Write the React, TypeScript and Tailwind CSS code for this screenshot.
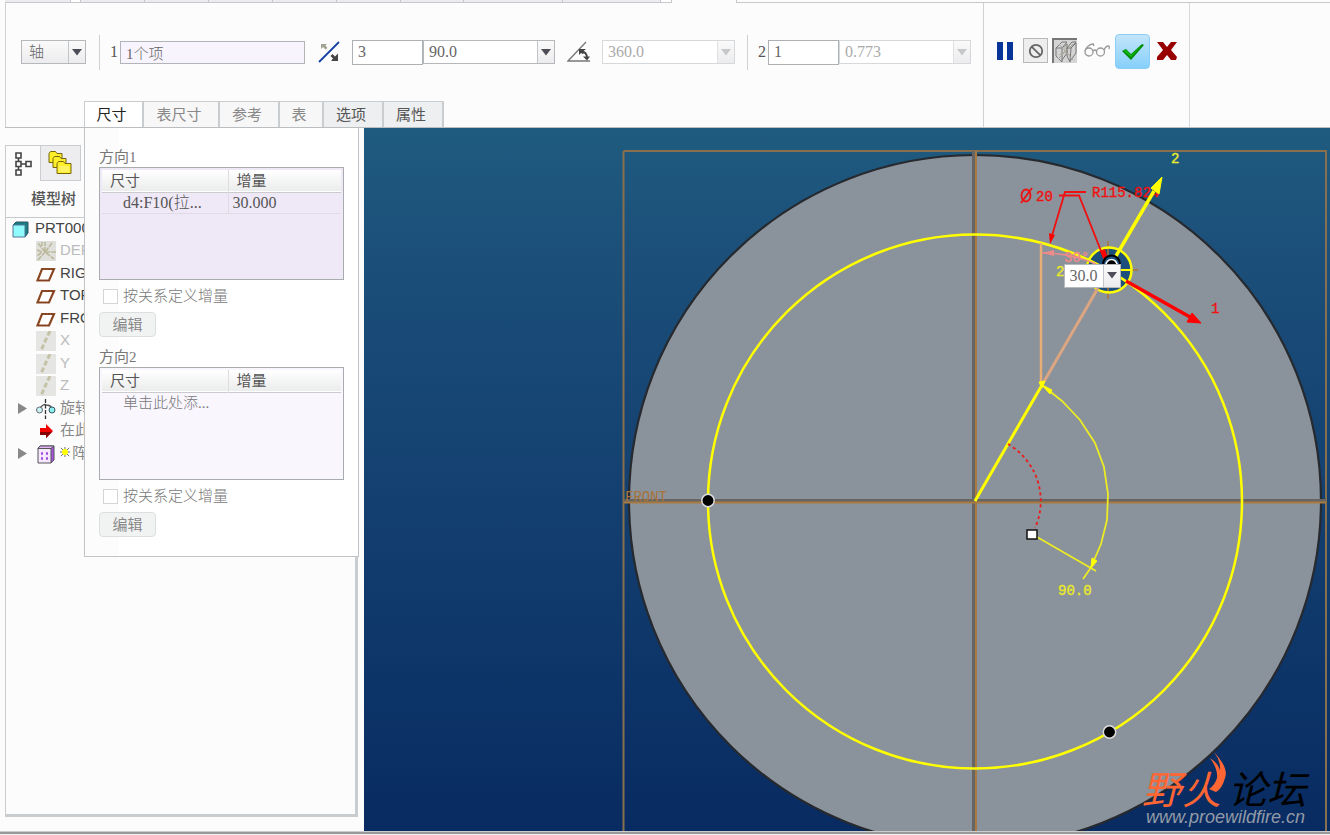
import type { ReactNode } from "react";
import clsx from "clsx";

interface ComboProps { label: string; value: string; width: string; disabled?: boolean; shaded?: boolean }

interface TreeNode { name: string; icon: ReactNode; muted?: boolean; expandable?: boolean; cjk?: boolean; fresh?: boolean }

const SONG = "font-['Liberation_Serif','Noto_Sans_CJK_SC',serif]";

const TABS = [
  { label: "尺寸", width: "w-[60px]", style: "bg-white text-[#222]" },
  { label: "表尺寸", width: "w-[76px]", style: "bg-[#f7f7f7] text-[#888]" },
  { label: "参考", width: "w-[60px]", style: "bg-[#f7f7f7] text-[#888]" },
  { label: "表", width: "w-[44px]", style: "bg-[#f7f7f7] text-[#888]" },
  { label: "选项", width: "w-[60px]", style: "bg-[#edeff1] text-[#555]" },
  { label: "属性", width: "w-[60px]", style: "bg-[#edeff1] text-[#555]" },
];

// Lower edges of the ribbon groups that are scrolled out above the dashboard
const GROUPS = ["w-[66px]", "w-[10px]", "w-[64px]", "w-[64px]", "w-[64px]", "w-[64px]", "w-[64px]", "w-[63px]", "w-[99px]", "w-[98px]", "w-[11px]"];

function Combo({ label, value, width, disabled, shaded }: ComboProps) {
  return (
    <div className={clsx("relative h-6 shrink-0", width)}>
      <select
        aria-label={label}
        disabled={disabled}
        className={clsx(
          "h-full w-full appearance-none rounded-none border pl-[5px] text-base leading-5 opacity-100",
          disabled ? "border-[#d6d9dc] text-[#aaa]" : "border-[#b5b9bc] text-[#666]",
          shaded ? "bg-linear-to-b from-[#fafafa] to-[#ececee] pl-[7px] text-[15px]" : "bg-white",
        )}
      >
        <option>{value}</option>
      </select>
      <span
        className={clsx(
          "pointer-events-none absolute inset-y-px right-px flex w-[17px] items-center justify-center border-l bg-linear-to-b from-[#fafafa] to-[#ececee]",
          disabled ? "border-[#dfe1e3] text-[#c5c7c9]" : "border-[#c3c6c8] text-[#4d4d58]",
        )}
      >
        <svg viewBox="0 0 10 7" className="w-2.5"><path d="M0 0h10L5 6.500z" fill="currentColor" /></svg>
      </span>
    </div>
  );
}

function FlipIcon() {
  return (
    <svg viewBox="0 0 22 22" className="w-[22px]">
      <path d="M1 21 21 1" stroke="#153fa5" strokeWidth="1.800" />
      <path d="M3 3h6L7.500 4.500 9.500 7 7.500 8.500 5 6 3 8z" fill="#a3a394" />
      <path d="M20 20h-7l2-2.500-2.500-2.500 2-2 2.500 2.500 3-3z" fill="#454545" />
    </svg>
  );
}

function AngleIcon() {
  return (
    <svg viewBox="0 0 24 22" className="w-6" fill="none">
      <path d="M19 1 1 20h22" stroke="#777" strokeWidth="1.300" />
      <path d="M14 10q6 1 6 7" stroke="#444" strokeWidth="1.800" />
      <path d="M12 8h7l-2.500 2 1 2-2 1-1.500-1-2 2zM16 15.500h7l-3 4z" fill="#444" />
    </svg>
  );
}

function CubeIcon() {
  return (
    <svg viewBox="0 0 22 22" className="w-[22px]" fill="none" strokeWidth="1">
      <path d="M1 7 7 1h5L7 7H1v8l6 6V7l5-4v9l-5 7M12 7l5-6h4l-5 6h-4v8l3 6 1-14 5-5v10l-6 8" stroke="#777" />
      <path d="M4 3 18 19M3 18 18 3M4 14l5-3 6 3M10 3v8" stroke="#aaa89c" />
    </svg>
  );
}

function GlassesIcon() {
  return (
    <svg viewBox="0 0 26 16" className="w-[26px]" fill="none" stroke="#999" strokeWidth="1.300">
      <circle cx="5" cy="10" r="4" />
      <circle cx="16.500" cy="10" r="4" />
      <path d="M9 9q1.500-2 3.500 0M1 9C2 5 6 2 9 2q1 0 .500 2M20 8q2-4 4-4 2 0 1 3" />
    </svg>
  );
}

function DatumPlane() {
  return (
    <svg viewBox="0 0 20 20" className="w-5">
      <path d="M6 5h12l-5 11.500H1.500z" fill="#fff" stroke="#95502a" strokeWidth="2.200" />
      <path d="M6 5h12l-5 11.500H1.500z" fill="none" stroke="#6d3517" strokeWidth=".8" strokeDasharray="2 1" />
    </svg>
  );
}

function DatumAxis() {
  return (
    <svg viewBox="0 0 20 20" className="w-5">
      <path d="M0 0h20v20H0z" fill="#e5e5e4" />
      <path d="M14 0q-5 10-9 20" fill="none" stroke="#c5c3a6" strokeWidth="3" strokeDasharray="5 2.500" />
    </svg>
  );
}

function CsysIcon() {
  return (
    <svg viewBox="0 0 20 20" className="w-5">
      <path d="M0 0h20v20H0z" fill="#dfdfdc" />
      <path d="m2 19 7-8 9 7M9 11 2 2M9 11h11M9 11V1M1 9l5 2-5 4M16 2l-6 8M6 1v4" fill="none" stroke="#bcb99b" strokeWidth="1.600" strokeDasharray="5 1" />
    </svg>
  );
}

const TREE: TreeNode[] = [
  { name: "DEFAULT", muted: true, icon: <CsysIcon /> },
  { name: "RIGHT", icon: <DatumPlane /> },
  { name: "TOP", icon: <DatumPlane /> },
  { name: "FRONT", icon: <DatumPlane /> },
  { name: "X", muted: true, icon: <DatumAxis /> },
  { name: "Y", muted: true, icon: <DatumAxis /> },
  { name: "Z", muted: true, icon: <DatumAxis /> },
  {
    name: "旋转", cjk: true, expandable: true,
    icon: (
      <svg viewBox="0 0 20 20" className="w-5">
        <path d="M3 10Q8 4 10 6q5 0 6 4" fill="none" stroke="#555" strokeWidth="1.300" />
        <path d="M9.500 0v20" stroke="#333" strokeWidth="1.300" strokeDasharray="4 1.500" />
        <circle cx="3.500" cy="11" r="3" fill="#c9f4f4" stroke="#667" />
        <circle cx="16" cy="11" r="3" fill="#8deeee" stroke="#356" />
      </svg>
    ),
  },
  {
    name: "在此", cjk: true,
    icon: (
      <svg viewBox="0 0 20 20" className="w-5">
        <path d="M4 7h6V3l7 7-7 7v-3H4z" fill="#f20000" />
        <path d="M4 11h12l-6 6v-3H4z" fill="#840000" />
      </svg>
    ),
  },
  {
    name: "阵列", cjk: true, expandable: true, fresh: true,
    icon: (
      <svg viewBox="0 0 20 20" className="w-5">
        <path d="M2 4.500 4 2h14v14l-3 3" fill="#a653e0" stroke="#555" />
        <path d="M2 4.500 4 2h14l-3 2.500z" fill="#e3b5fb" stroke="#555" />
        <path d="M2 4.500h13V19H2z" fill="#f6e8ff" stroke="#555" />
        <path d="M5 9.500h2M10 9.500h2M5 14.500h2M10 14.500h2" stroke="#a34be0" strokeWidth="2.500" />
      </svg>
    ),
  },
];

function Dashboard() {
  return (
    <div className="relative z-10 ml-[5px] flex h-[125px] border-b border-[#babec1]">
      <div className="relative w-[979px] shrink-0 border-x border-[#cfd2d4] text-[#555]">
        <div className="flex h-[98px] items-center pl-[15px]">
          <Combo label="阵列类型" value="轴" width="w-[65px]" shaded />
          <span className="ml-[13px] h-[35px] w-px bg-[#cfd1d3]" />
          <label htmlFor="axis" className="ml-2.5 text-base">1</label>
          <input id="axis" defaultValue="1个项" className="ml-0.5 h-[23px] w-[185px] border border-[#b2b5b8] bg-[#f8f4fd] px-[5px] text-[15px] text-[#666]" />
          <button aria-label="反向" className="ml-[13px]"><FlipIcon /></button>
          <input aria-label="成员数" defaultValue="3" className="ml-3 h-[25px] w-[71px] shrink-0 border border-[#adb1b4] bg-white px-[5px] text-base text-[#666]" />
          <Combo label="角度" value="90.0" width="w-[132px]" />
          <button aria-label="角度范围" className="ml-3"><AngleIcon /></button>
          <span className="w-[11px]" />
          <Combo label="总角度" value="360.0" width="w-[133px]" disabled />
          <span className="ml-3 h-[35px] w-px bg-[#cfd1d3]" />
          <label htmlFor="radial" className="ml-2.5 text-base">2</label>
          <input id="radial" defaultValue="1" className="ml-0.5 h-[25px] w-[71px] shrink-0 border border-[#adb1b4] bg-white px-[5px] text-base text-[#666]" />
          <Combo label="径向间距" value="0.773" width="w-[132px]" disabled />
        </div>
        <div className="flex h-[26px] pl-[78px]" role="tablist">
          {TABS.map((tab, i) => (
            <button
              key={tab.label}
              role="tab"
              aria-selected={i === 0}
              className={clsx("h-full border-t border-r-2 border-[#c9cdd0] pr-1 text-[15px] leading-5 font-normal", i === 0 && "border-l", tab.width, tab.style)}
            >
              {tab.label}
            </button>
          ))}
        </div>
        <DimensionPanel />
      </div>
      <div className="flex h-full w-[206px] shrink-0 items-start border-r border-[#d6d9db] pt-[31px] pl-[13px]">
        <button aria-label="暂停" className="mt-2 flex h-[18px] w-4 justify-between">
          <span className="w-1.5 bg-[#073499]" />
          <span className="w-1.5 bg-[#073499]" />
        </button>
        <button aria-label="无预览" className="mt-1 ml-2.5 flex size-[25px] items-center justify-center border border-[#b9b9b9] bg-[#eee]">
          <svg viewBox="0 0 18 18" className="w-4" fill="none" stroke="#666" strokeWidth="2"><circle cx="9" cy="9" r="7" /><path d="m4 4 10 10" /></svg>
        </button>
        <button aria-label="几何预览" className="mt-1 ml-1 flex size-[25px] items-center justify-center border-t-2 border-l-2 border-[#777] bg-[#d4d4d4]"><CubeIcon /></button>
        <button aria-label="校验" className="mt-2 ml-[7px]"><GlassesIcon /></button>
        <button aria-label="确定" className="ml-[5px] flex h-[35px] w-[35px] items-center justify-center rounded-sm border border-[#8ccdf5] bg-linear-to-b from-[#c2e5fb] to-[#85cffa]">
          <svg viewBox="0 0 22 18" className="w-[22px]"><path d="m0 8 4-2 5 5L20 1l2 1L9 17z" fill="#008c00" /><path d="m2 8 2-1 5 5L20 2 9 14z" fill="#10bb16" /></svg>
        </button>
        <button aria-label="取消" className="mt-2 ml-[7px]">
          <svg viewBox="0 0 20 18" className="w-5"><path d="M0 0h6l4 5 4-5h6l-6 8 6 7-1 3h-5l-4-5-4 5H0v-3l6-7z" fill="#980000" /></svg>
        </button>
      </div>
    </div>
  );
}

function DirectionTable({ index, dimension, increment }: { index: number; dimension: string; increment?: string }) {
  return (
    <section className="mb-[11px] text-[15px] text-[#777]">
      <h2 className="h-[19px] leading-[19px] font-normal">方向{index}</h2>
      <div className={clsx("h-[113px] w-[245px] border border-[#a9acae] p-0.5", increment ? "bg-[#efe9f7]" : "bg-[#f9f6fe]")}>
        <table className="w-full table-fixed border-collapse text-left">
          <thead>
            <tr className="h-[22px] border-b border-[#c9cbcd] bg-linear-to-b from-white to-[#ebecec] text-[#555]">
              <th className="w-[126px] border-r border-[#ddd] pl-2 leading-5 font-normal">尺寸</th>
              <th className="pl-2 leading-5 font-normal">增量</th>
            </tr>
          </thead>
          <tbody>
            <tr className={clsx("h-[21px]", increment && "border-b border-[#dfdbe4] text-base text-[#555]")}>
              <td className={clsx("pl-[21px] leading-5 whitespace-nowrap", increment && "border-r border-[#dfdbe4]")}>{dimension}</td>
              <td className="pl-1 leading-5">{increment}</td>
            </tr>
          </tbody>
        </table>
      </div>
      <label className="mt-[5px] ml-1 flex h-[22px] items-center gap-[5px]">
        <input type="checkbox" className="size-[15px] appearance-none border border-[#d5d5d5] bg-white" />
        按关系定义增量
      </label>
      <button className="mt-[5px] block h-[25px] w-[57px] rounded-sm border border-[#dcdedf] bg-[#f1f3f3] leading-5 font-normal text-[#888]">编辑</button>
    </section>
  );
}

function DimensionPanel() {
  return (
    <div className="absolute top-full left-[78px] mt-px w-[275px] border border-t-0 border-[#c0c4c8] bg-linear-to-r from-[#fcfcfc] from-[34px] to-white to-[34px] pt-5 pb-2 pl-3.5">
      <DirectionTable index={1} dimension="d4:F10(拉..." increment="30.000" />
      <DirectionTable index={2} dimension="单击此处添..." />
    </div>
  );
}

function ModelTree() {
  return (
    <aside className="flex w-[364px] shrink-0 flex-col pt-[17px] pr-1.5 pb-3.5 pl-[5px]">
      <div className="flex h-9 text-[#333]">
        <button aria-label="模型树" className="flex w-9 items-center justify-center border border-b-0 border-[#c9cdd0]">
          <svg viewBox="0 0 17 24" className="w-[17px]" fill="none" stroke="#444" strokeWidth="1.600"><path d="M1 1h5v5H1zM1 9.500h5v5H1zM1 18h5v5H1zM11 9.500h5v5h-5zM3.500 6v3.500M3.500 14.500V18M6 12h5" /></svg>
        </button>
        <button aria-label="文件夹浏览器" className="flex w-10 items-center justify-center border-y border-r border-[#c9cdd0] bg-[#ededf0] pr-0.5">
          <svg viewBox="0 0 24 24" className="w-6" fill="#ffef28" stroke="#75640f">
            <path d="M1 2.500 2.500.500h5l1.500 2h5v9H1z" />
            <path d="m5 7.500 1.500-2h5l1.500 2h5v9H5z" />
            <path d="m9 12.500 1.500-2h5l1.500 2h6v10H9z" />
            <path d="M11 16h10M11 18h10M11 20h10" stroke="#fff7a1" />
          </svg>
        </button>
      </div>
      <div className="flex flex-1 flex-col border-r-[3px] border-b-[3px] border-l border-[#c9cdd0]">
        <h2 className="h-[37px] border-b border-[#c6cacc] pl-[25px] text-[15px] leading-9 font-medium text-[#555]">模型树</h2>
        <ul className="text-[15px] text-[#444]">
          <li className="flex h-[22px] items-center pl-1.5 font-['Liberation_Sans',sans-serif]">
            <svg viewBox="0 0 17 17" className="mr-1.5 w-[17px]"><path d="M1 4 4 1h12v11l-3 4" fill="#147f83" stroke="#356" /><path d="M1 4h12v12H1z" fill="#91fbfb" stroke="#579" /></svg>
            <span className="pb-0.5 leading-5">PRT000</span>
          </li>
          {TREE.map(node => (
            <li key={node.name} className="flex h-[22px] items-center pl-3 odd:h-[23px]">
              <span className="mr-[9px] w-[9px] text-[#888]">
                {node.expandable && <svg viewBox="0 0 9 11" className="w-[9px]"><path d="M0 0v11l9-5.500z" fill="currentColor" /></svg>}
              </span>
              <span className="mr-1 w-5">{node.icon}</span>
              {node.fresh && (
                <svg viewBox="0 0 12 12" className="mr-0.5 mb-1 w-2.5"><path d="m1 1 10 10M1 11 11 1M6 0v12M0 6h12" stroke="#555" /><circle cx="6" cy="6" r="3.500" fill="#ff0" /></svg>
              )}
              <span className={clsx("pb-0.5 leading-5 whitespace-nowrap", node.muted && "text-[#bbb]", node.cjk ? "font-normal text-[#888]" : "font-['Liberation_Sans',sans-serif]")}>{node.name}</span>
            </li>
          ))}
        </ul>
      </div>
    </aside>
  );
}

function Viewport() {
  return (
    <main className="relative flex-1">
      <svg viewBox="364 128 966 703" className="block w-full" fill="none">
        <defs>
          <linearGradient id="sky" x1="0" y1="0" x2="0" y2="1">
            <stop offset="0" stopColor="#1f5b7f" />
            <stop offset=".2" stopColor="#1b4e79" />
            <stop offset="1" stopColor="#082b62" />
          </linearGradient>
        </defs>
        <path d="M364 128h966v703H364z" fill="url(#sky)" />
        <circle cx="975" cy="501" r="346" fill="#8a929b" stroke="#26292e" strokeWidth="2.200" />

        {/* datum planes */}
        <g strokeWidth="2">
          <path d="M623.500 151H1326V831M623.500 151V831" stroke="#88704f" />
          <path d="M973.500 151V831M624 500.500h702" stroke="#666563" strokeWidth="3" />
          <path d="M976 151V831M624 502.500h702" stroke="#a87a42" />
        </g>
        <text x="625" y="501" fill="#a8733a" fontFamily="Liberation Mono, monospace" fontSize="14" fontWeight="400">FRONT</text>

        {/* hole and pattern circle */}
        <circle cx="1108" cy="270" r="23" fill="#1c4f7b" />
        <path d="M1108 241v58M1079 270h59" stroke="#a8733a" strokeWidth="1.500" />
        <circle cx="975" cy="501.500" r="267" stroke="#ff0" strokeWidth="2.500" />
        <circle cx="1109" cy="270" r="22.500" stroke="#ff0" strokeWidth="2.500" />
        <path d="M1109 270h23" stroke="#ff0" strokeWidth="2" />

        {/* angular references */}
        <path d="M1041 243v142" stroke="#e7ae75" strokeWidth="2.500" />
        <path d="m1042 385 56-97" stroke="#dba681" strokeWidth="3" />
        <path d="M1042 253q28 0 54 11" stroke="#ee8b8b" strokeWidth="1.500" />
        <path d="m1042 253 12-3v6z" fill="#ee8b8b" />
        <path d="m975 501 67-116" stroke="#ff0" strokeWidth="3" />
        <path d="M1042 385 1062 401 1080 420 1095 443 1104 467 1108 494 1107 520 1101 544 1091 567M1037 537l59 34M1083 579l9-13" stroke="#ecec25" strokeWidth="1.800" />
        <path d="m1042 385 10 5-2 4zM1091 568l1-10 5 3zM1039 382l3 6 3-7z" fill="#ff0" stroke="#ff0" />
        <path d="M1008 444A66 66 0 0 1 1035 528" stroke="#f01919" strokeWidth="1.800" strokeDasharray="3 3" />
        <path d="M1027 530h10v9h-10z" fill="#fff" stroke="#111" strokeWidth="1.500" />

        {/* leaders */}
        <path d="M1059 195.500h20l25 63M1086 192h-21l-14 47" stroke="#f01010" strokeWidth="1.800" />
        <path d="m1050 244-1-11 6 2zM1106 264l-6-13 5-2 4 13z" fill="#f00" />
        <g fill="#ef1212" stroke="#ef1212" strokeWidth=".4" fontFamily="Liberation Mono, monospace" fontSize="14">
          <text x="1036" y="201">20</text>
          <text x="1092" y="197">R115.824</text>
          <text x="1211" y="313">1</text>
          <text x="1064" y="262" fill="#ee8b8b" stroke="#ee8b8b">30°</text>
        </g>
        <ellipse cx="1026" cy="195.500" rx="4.500" ry="6" stroke="#ef1212" strokeWidth="1.800" />
        <path d="m1021 203 11-15" stroke="#ef1212" strokeWidth="1.800" />
        <g fill="#e9e92b" stroke="#e9e92b" strokeWidth=".4" fontFamily="Liberation Mono, monospace" fontSize="14">
          <text x="1171" y="163">2</text>
          <text x="1056" y="276">2</text>
          <text x="1058" y="595">90.0</text>
        </g>

        {/* direction arrows */}
        <path d="m1116 256 38-65" stroke="#ff0" strokeWidth="3.500" />
        <path d="m1162 177-11 11 8 6z" fill="#ff0" stroke="#ff0" />
        <path d="m1126 281 64 36" stroke="#f00" strokeWidth="3.500" />
        <path d="m1201 323-9-10-5 9z" fill="#f00" stroke="#f00" />
        <path d="M1103 264a8.500 8.500 0 0 1 17 0" fill="#1c4f7b" stroke="#000" strokeWidth="2" />
        <path d="M1106 265a5.500 5.500 0 0 1 11 0" fill="#000" stroke="#fff" strokeWidth="1.500" />
        <g fill="#000" stroke="#ddd" strokeWidth="1.500">
          <circle cx="708" cy="500.500" r="6.200" />
          <circle cx="1109.500" cy="732" r="6.200" />
        </g>

        {/* forum mark */}
        <g fontFamily="Noto Sans CJK SC, sans-serif" fontSize="39" fontStyle="italic" fontWeight="400">
          <text x="1142" y="804" fill="#ff6633">野</text>
          <text x="1182" y="804" fill="#ff6633">火</text>
          <text x="1228" y="804" fill="#000">论坛</text>
        </g>
        <path d="M1214 752q15 16 11 26-3 11-9 14l-7-3q6-4 8-11 1-9-7-20 9 6 10 13 1-10-6-19z" fill="#ff6633" />
        <text x="1146" y="823" fill="#929aa6" fontFamily="Liberation Sans, sans-serif" fontSize="18" fontStyle="italic">www.proewildfire.cn</text>
      </svg>
      <div className="absolute top-[19%] left-[72%] mt-0.5 ml-1">
        <Combo label="增量值" value="30.0" width="w-[57px]" />
      </div>
    </main>
  );
}

export default function App() {
  return (
    <div className={clsx("min-h-screen bg-[#f2f2f2] font-light", SONG)}>
      <div className="bg-[#fcfcfc]">
        <div className="flex h-[3px] pl-[5px]">
          {GROUPS.map((w, i) => (
            <span key={i} className={clsx("shrink-0 border-r border-b border-[#c6c9cc]", w, w === "w-[10px]" || w === "w-[11px]" ? "bg-white" : "bg-[#ececee]")} />
          ))}
          <span className="w-16 shrink-0" />
          <span className="flex-1 border-b border-l border-[#c6c9cc]" />
        </div>
        <Dashboard />
        <div className="flex">
          <ModelTree />
          <Viewport />
        </div>
      </div>
      <footer className="h-[3px] border-t border-[#ccc] bg-[#999]" />
    </div>
  );
}
